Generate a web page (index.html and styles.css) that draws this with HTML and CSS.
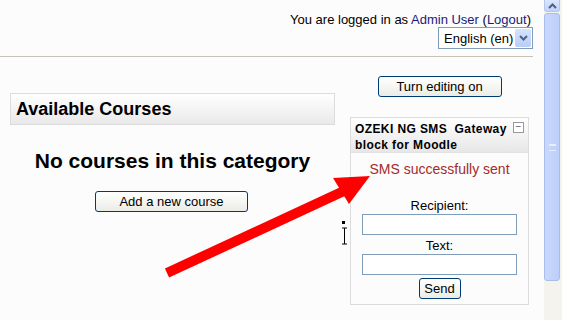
FILE: index.html
```html
<!DOCTYPE html>
<html lang="en">
<head>
    <meta charset="UTF-8">
    <title>Moodle - OZEKI NG SMS Gateway block</title>
    <link rel="stylesheet" href="styles.css">
</head>
<body>
    <div class="window">
        <div class="main">
            <div class="header">
                <div class="logininfo">You are logged in as <a href="#">Admin User</a> (<a href="#">Logout</a>)</div>
                <div class="langmenu">
                    <span class="lang-value">English (en)</span>
                    <span class="lang-arrow">
                        <svg width="9" height="6" viewBox="0 0 9 6"><path d="M1 1 L4.5 4.5 L8 1" fill="none" stroke="#4d6185" stroke-width="2"/></svg>
                    </span>
                </div>
            </div>

            <div class="content">
                <div class="left-col">
                    <h2 class="box-title">Available Courses</h2>
                    <h1 class="empty-msg">No courses in this category</h1>
                    <div class="center">
                        <button class="btn btn-wide">Add a new course</button>
                    </div>
                </div>

                <div class="right-col">
                    <button class="btn btn-edit">Turn editing on</button>
                    <div class="block">
                        <div class="block-header">
                            <span class="block-title">OZEKI NG SMS&nbsp; Gateway block for Moodle</span>
                            <span class="hide-icon">&minus;</span>
                        </div>
                        <div class="block-content">
                            <div class="notice">SMS successfully sent</div>
                            <label class="field-label">Recipient:</label>
                            <input class="field" type="text">
                            <label class="field-label">Text:</label>
                            <input class="field" type="text">
                            <button class="btn btn-send">Send</button>
                        </div>
                    </div>
                </div>
            </div>

            <!-- annotation drawn over the screenshot -->
            <svg class="annotation" width="544" height="320" viewBox="0 0 544 320">
                <line x1="167" y1="273" x2="346" y2="190" stroke="#ff0000" stroke-width="10"/>
                <polygon points="333,178 370,176 349,204" fill="#ff0000"/>
                <rect x="342" y="221" width="3" height="3" fill="#000"/>
                <path d="M342 228 h5 M344.5 228 v16 M342 244 h5" stroke="#000" stroke-width="1" fill="none"/>
            </svg>
        </div>

        <div class="scrollbar">
            <div class="scroll-up">
                <svg width="9" height="6" viewBox="0 0 9 6"><path d="M1 5 L4.5 1.5 L8 5" fill="none" stroke="#4d6185" stroke-width="2"/></svg>
            </div>
            <div class="thumb">
                <span class="grip"></span>
            </div>
        </div>
    </div>
</body>
</html>
```

FILE: styles.css
```css
body {
    margin: 0;
    font-family: 'Liberation Sans', Arial, sans-serif;
    background-color: #fcfcfc;
    color: #000;
}

.window {
    display: flex;
    width: 562px;
    height: 320px;
    overflow: hidden;
}

.main {
    position: relative;
    width: 544px;
    flex: none;
}

/* top bar */
.header {
    width: 533px;
    height: 57px;
    border-bottom: 1px solid #c6c2b6;
    display: flex;
    flex-direction: column;
    align-items: flex-end;
    box-sizing: border-box;
    padding-top: 12px;
}

.logininfo {
    font-size: 13px;
    line-height: 15px;
    padding-right: 2px;
}

.logininfo a {
    color: #1a1a7a;
    text-decoration: none;
}

.langmenu {
    margin-top: 0;
    width: 95px;
    height: 22px;
    border: 1px solid #7f9db9;
    box-sizing: border-box;
    background-color: #fff;
    display: flex;
    align-items: center;
    font-size: 13px;
}

.lang-value {
    flex: 1;
    padding-left: 5px;
}

.lang-arrow {
    width: 16px;
    height: 18px;
    margin-right: 1px;
    background: linear-gradient(#d6e3fe, #b9cdf8);
    border-radius: 2px;
    display: flex;
    align-items: center;
    justify-content: center;
}

/* page body */
.content {
    display: flex;
    padding: 19px 0 0 10px;
    gap: 15px;
}

.left-col {
    width: 325px;
    padding-top: 17px;
}

.box-title {
    margin: 0;
    height: 32px;
    line-height: 31px;
    padding-left: 5px;
    font-size: 18px;
    font-weight: bold;
    border: 1px solid #dcdcdc;
    box-sizing: border-box;
    background: linear-gradient(#ffffff, #e9e9e9);
}

.empty-msg {
    margin: 24px 0 0 0;
    font-size: 21px;
    line-height: 24px;
    text-align: center;
    font-weight: bold;
}

.center {
    text-align: center;
    margin-top: 18px;
    padding-right: 2px;
}

.btn {
    font-family: 'Liberation Sans', Arial, sans-serif;
    font-size: 13px;
    color: #000;
    background: linear-gradient(#ffffff, #ecece6);
    border: 1px solid #003c74;
    border-radius: 3px;
    height: 21px;
    padding: 0 6px;
}

.btn-wide {
    width: 153px;
}

.right-col {
    width: 179px;
    display: flex;
    flex-direction: column;
    align-items: center;
}

.btn-edit {
    width: 124px;
    height: 21px;
}

/* sms block */
.block {
    margin-top: 20px;
    width: 179px;
    height: 188px;
    border: 1px solid #dcdcdc;
    box-sizing: border-box;
}

.block-header {
    display: flex;
    align-items: flex-start;
    height: 35px;
    box-sizing: border-box;
    padding: 3px 4px 0 4px;
    background: linear-gradient(#ffffff, #e7e7e7);
    border-bottom: 1px solid #e2e2e2;
}

.block-title {
    flex: 1;
    font-size: 12px;
    font-weight: bold;
    line-height: 16px;
    letter-spacing: 0.4px;
}

.hide-icon {
    width: 9px;
    height: 9px;
    margin-top: 1px;
    border: 1px solid #999;
    font-size: 10px;
    line-height: 8px;
    text-align: center;
    color: #555;
    background: #fff;
}

.block-content {
    display: flex;
    flex-direction: column;
    align-items: center;
    padding-top: 8px;
}

.notice {
    color: #a52a2a;
    font-size: 14px;
    line-height: 16px;
    margin-bottom: 21px;
}

.field-label {
    font-size: 13px;
    line-height: 15px;
}

.field {
    width: 155px;
    height: 21px;
    box-sizing: border-box;
    border: 1px solid #7f9db9;
    margin: 1px 0 3px 0;
    background: #fff;
}

.btn-send {
    width: 42px;
    height: 21px;
    padding: 0;
    margin-top: 0;
}

.annotation {
    position: absolute;
    left: 0;
    top: 0;
    pointer-events: none;
}

/* fake browser scrollbar */
.scrollbar {
    width: 18px;
    height: 320px;
    background-color: #f4f3ee;
    display: flex;
    flex-direction: column;
    align-items: flex-start;
}

.scroll-up {
    width: 16px;
    height: 12px;
    background: linear-gradient(#dbe6fe, #c1d2fb);
    border: 1px solid #b3c6ef;
    border-top: none;
    border-radius: 0 0 3px 3px;
    box-sizing: border-box;
    display: flex;
    align-items: center;
    justify-content: center;
}

.thumb {
    margin-top: 1px;
    width: 16px;
    height: 268px;
    box-sizing: border-box;
    border: 1px solid #a9bdeb;
    border-radius: 3px;
    background: linear-gradient(90deg, #c9d8fc, #bccffa);
    display: flex;
    align-items: center;
    justify-content: center;
}

.grip {
    width: 7px;
    height: 5px;
    border-top: 1px solid #e6eeff;
    border-bottom: 1px solid #e6eeff;
    box-shadow: inset 0 2px 0 -1px #e6eeff;
}
```
